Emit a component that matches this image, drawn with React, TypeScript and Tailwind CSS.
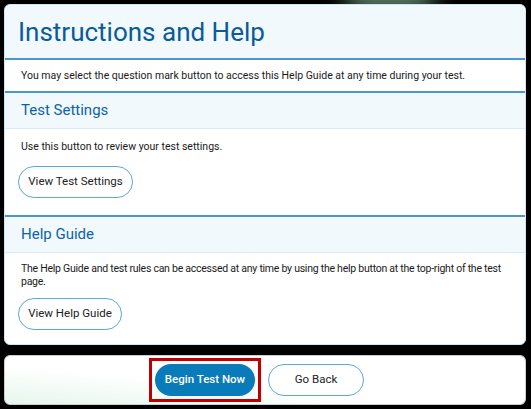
import React from 'react';

const font = { fontFamily: 'Roboto, "Liberation Sans", sans-serif' };

function SectionHeader({ title }: { title: string }) {
  return (
    <div className="h-[38px] flex items-center px-[16px] bg-[#f1f9fd] border-t-2 border-[#4b97c9] border-b border-b-[#d6ecf7]">
      <h2 className="text-[15px] text-[#0d62a6] leading-none">{title}</h2>
    </div>
  );
}

function OutlineButton({ label, className = '' }: { label: string; className?: string }) {
  return (
    <button
      className={`h-[32px] rounded-full border border-[#5aa9d6] bg-white text-[11.5px] text-[#222] flex items-center justify-center ${className}`}
    >
      {label}
    </button>
  );
}

export default function App() {
  return (
    <div className="relative w-[531px] h-[409px] bg-black pt-[4px] pl-[4px] pr-[5px] pb-[4px] flex flex-col gap-[10px] overflow-hidden" style={font}>
      <div className="absolute -top-[22px] left-[345px] w-[90px] h-[34px] rounded-full bg-[#9fdcb6] blur-[12px] opacity-60"></div>

      {/* main panel */}
      <div className="h-[341px] rounded-[6px] border border-[#cfe5f0] bg-white overflow-hidden flex flex-col relative">
        <div className="absolute -top-[30px] left-[335px] w-[100px] h-[40px] rounded-full bg-[#c6ecd5] blur-[14px] opacity-60"></div>
        <div className="h-[53px] bg-[#f1f9fd] flex items-center px-[13px] relative">
          <h1 className="text-[26px] text-[#0b5a9c] leading-none">Instructions and Help</h1>
        </div>
        <div className="h-[33px] flex items-center px-[16px] border-t-2 border-[#4b97c9]">
          <p className="text-[10.5px] text-[#1a1a1a]">
            You may select the question mark button to access this Help Guide at any time during your test.
          </p>
        </div>
        <SectionHeader title="Test Settings" />
        <div className="h-[86px] px-[13px] pt-[11px]">
          <p className="text-[10.5px] text-[#1a1a1a] pl-[3px] leading-[14px]">Use this button to review your test settings.</p>
          <OutlineButton label="View Test Settings" className="w-[115px] mt-[12px]" />
        </div>
        <SectionHeader title="Help Guide" />
        <div className="flex-1 px-[13px] pt-[9px]">
          <p className="text-[10.5px] tracking-[-0.25px] text-[#1a1a1a] pl-[3px] leading-[13px]">
            The Help Guide and test rules can be accessed at any time by using the help button at the top-right of the test page.
          </p>
          <OutlineButton label="View Help Guide" className="w-[104px] mt-[10px]" />
        </div>
      </div>

      {/* footer */}
      <div className="h-[50px] rounded-[6px] border border-[#c9cfcf] bg-gradient-to-tr from-[#e6f6ec] via-white via-40% to-white shadow-[0_1px_2px_rgba(0,0,0,0.25)] flex items-center justify-center gap-[7px] pr-[17px]">
        <div className="border-[3px] border-[#c00000] p-[3px]">
          <button className="w-[100px] h-[32px] rounded-full bg-[#0a7bb9] text-white text-[11.5px] font-medium">
            Begin Test Now
          </button>
        </div>
        <OutlineButton label="Go Back" className="w-[96px]" />
      </div>
    </div>
  );
}
